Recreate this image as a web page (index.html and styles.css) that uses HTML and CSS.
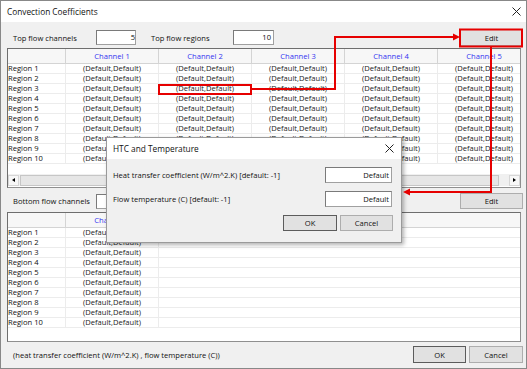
FILE: index.html
```html
<!DOCTYPE html>
<html lang="en">
<head>
  <meta charset="UTF-8" />
  <title>Convection Coefficients</title>
  <link rel="stylesheet" href="styles.css">
</head>
<body>
  <div class="window">
    <div class="titlebar">
      <span class="title">Convection Coefficients</span>
      <svg class="close" width="9" height="9" viewBox="0 0 9 9"><path d="M0.5 0.5L8.5 8.5M8.5 0.5L0.5 8.5" stroke="#222" stroke-width="1"/></svg>
    </div>

    <div class="toolbar">
      <span class="lbl lbl-channels">Top flow channels</span>
      <div class="field field-channels">5</div>
      <span class="lbl lbl-regions">Top flow regions</span>
      <div class="field field-regions">10</div>
      <button class="btn btn-edit">Edit</button>
    </div>

    <div class="grid grid-top">
      <div class="row row-head">
        <div class="cell head-col"></div>
        <div class="cell chan">Channel 1</div>
        <div class="cell chan">Channel 2</div>
        <div class="cell chan">Channel 3</div>
        <div class="cell chan">Channel 4</div>
        <div class="cell chan">Channel 5</div>
      </div>
      <div id="topRows"></div>
      <div class="grid-space"></div>
      <div class="hscroll">
        <div class="sb-btn"><span class="tri-left"></span></div>
        <div class="sb-thumb"></div>
        <div class="sb-btn"><span class="tri-right"></span></div>
      </div>
    </div>

    <div class="toolbar toolbar-bottom">
      <span class="lbl lbl-channels">Bottom flow channels</span>
      <div class="field field-channels"></div>
      <button class="btn btn-edit">Edit</button>
    </div>

    <div class="grid grid-bottom">
      <div class="row row-head">
        <div class="cell head-col"></div>
        <div class="cell chan">Channel 1</div>
        <div class="cell fill"></div>
      </div>
      <div id="bottomRows"></div>
    </div>

    <div class="footer">
      <span class="status">(heat transfer coefficient (W/m^2.K) , flow temperature (C))</span>
      <button class="btn btn-default">OK</button>
      <button class="btn">Cancel</button>
    </div>

    <div class="dialog">
      <div class="dlg-title">
        <span class="title">HTC and Temperature</span>
        <svg class="close" width="9" height="9" viewBox="0 0 9 9"><path d="M0.5 0.5L8.5 8.5M8.5 0.5L0.5 8.5" stroke="#222" stroke-width="1"/></svg>
      </div>
      <div class="dlg-body">
        <div class="dlg-row">
          <span>Heat transfer coefficient (W/m^2.K) [default: -1]</span>
          <div class="field dlg-field">Default</div>
        </div>
        <div class="dlg-row">
          <span>Flow temperature (C) [default: -1]</span>
          <div class="field dlg-field">Default</div>
        </div>
        <div class="dlg-buttons">
          <button class="btn btn-default dlg-ok">OK</button>
          <button class="btn dlg-cancel">Cancel</button>
        </div>
      </div>
    </div>
  </div>

  <!-- red call-outs drawn over the screenshot -->
  <svg class="marks" width="527" height="369" viewBox="0 0 527 369">
    <g fill="none" stroke="#e60000" stroke-width="2">
      <rect x="159" y="85" width="92" height="9"/>
      <polyline points="251,89 335,89 335,37 454,37"/>
      <rect x="460" y="29.5" width="62" height="17"/>
      <polyline points="491,47 491,192 409,192"/>
    </g>
    <g fill="#e60000">
      <polygon points="460,37 453,33.5 453,40.5"/>
      <polygon points="403,192 410,188.5 410,195.5"/>
    </g>
  </svg>

  <script>
    function fillRows(id, count, filler) {
      const body = document.getElementById(id);
      for (let r = 1; r <= 10; r++) {
        const row = document.createElement("div");
        row.className = "row";
        let html = `<div class="cell head-col">Region ${r}</div>`;
        for (let c = 0; c < count; c++) html += `<div class="cell val">(Default,Default)</div>`;
        if (filler) html += `<div class="cell fill"></div>`;
        row.innerHTML = html;
        body.appendChild(row);
      }
    }
    fillRows("topRows", 5, false);
    fillRows("bottomRows", 1, true);
  </script>
</body>
</html>
```

FILE: styles.css
```css
body {
  margin: 0;
  position: relative;
  font-family: "Open Sans", "Liberation Sans", sans-serif;
  font-size: 7.6px;
  color: #111;
  background: #fff;
}
button {
  font-family: inherit;
  font-size: inherit;
  color: #111;
  padding: 0;
}
.window {
  position: relative;
  width: 527px;
  height: 369px;
  box-sizing: border-box;
  border: 1px solid #888;
  background: #f0f0f0;
  overflow: hidden;
}
.titlebar {
  height: 21px;
  background: #fff;
  display: flex;
  align-items: center;
  padding: 0 5px 0 6px;
}
.title {
  font-size: 8.3px;
  color: #111;
}
.close {
  margin-left: auto;
}

/* top / bottom rows with label, field and edit button */
.toolbar {
  display: flex;
  align-items: center;
  height: 17px;
  margin-top: 7px;
  padding: 0 3px 0 12px;
}
.toolbar-bottom {
  height: 16px;
  margin-top: 5px;
}
.lbl-channels {
  width: 83px;
  white-space: nowrap;
}
.lbl-regions {
  width: 82px;
  margin-left: 17px;
}
.field {
  box-sizing: border-box;
  height: 15px;
  background: #fff;
  border: 1px solid #a0a0a0;
  border-top-color: #7a7a7a;
  border-left-color: #7a7a7a;
  text-align: right;
  line-height: 13px;
  padding-right: 2px;
  overflow: hidden;
}
.field-channels {
  width: 40px;
  padding-right: 0;
  margin-right: -2px;
}
.field-regions {
  width: 41px;
}
.btn {
  box-sizing: border-box;
  background: #e1e1e1;
  border: 1px solid #adadad;
  height: 17px;
  line-height: 14px;
}
.btn-default {
  border-color: #5c5c5c;
}
.btn-edit {
  margin-left: auto;
  width: 63px;
}
.toolbar-bottom .btn-edit {
  height: 16px;
}

/* grids */
.grid {
  box-sizing: border-box;
  margin: 2px 5px 0 6px;
  height: 140px;
  background: #fff;
  border: 1px solid #8f8f8f;
  border-top-color: #6e6e6e;
  border-left-color: #6e6e6e;
  display: flex;
  flex-direction: column;
  overflow: hidden;
}
.grid-bottom {
  margin-top: 3px;
  height: 130px;
}
.row {
  display: flex;
  height: 10px;
  flex: none;
}
.row-head {
  height: 15px;
  background: #f7f7f7;
}
.cell {
  box-sizing: border-box;
  flex: none;
  width: 93px;
  border-right: 1px solid #ececec;
  border-bottom: 1px solid #ececec;
  line-height: 9px;
  white-space: nowrap;
  overflow: hidden;
}
.row-head .cell {
  border-right-color: #d4d4d4;
  border-bottom-color: #d4d4d4;
  line-height: 14px;
}
.head-col {
  width: 58px;
}
.chan {
  text-align: center;
  color: #3434f0;
}
.val {
  text-align: center;
  color: #222;
}
.fill {
  flex: 1;
  border-right: none;
}
.grid-space {
  flex: 1;
}
.hscroll {
  display: flex;
  align-items: center;
  height: 12px;
  margin-bottom: 1px;
  background: #f0f0f0;
}
.sb-btn {
  width: 11px;
  height: 11px;
  display: flex;
  align-items: center;
  justify-content: center;
  background: #f7f7f7;
  border: 1px solid #d6d6d6;
  box-sizing: border-box;
}
.sb-thumb {
  flex: 1;
  height: 11px;
  box-sizing: border-box;
  margin: 0 10px 0 1px;
  background: #e6e6e6;
  border: 1px solid #c6c6c6;
}
.tri-left {
  border-top: 2.5px solid transparent;
  border-bottom: 2.5px solid transparent;
  border-right: 3px solid #000;
}
.tri-right {
  border-top: 2.5px solid transparent;
  border-bottom: 2.5px solid transparent;
  border-left: 3px solid #000;
}

/* footer */
.footer {
  display: flex;
  align-items: center;
  margin-top: 4px;
  padding: 0 3px 0 12px;
  gap: 3px;
}
.status {
  margin-right: auto;
}
.footer .btn {
  width: 54px;
}
.footer .btn-default {
  width: 53px;
}

/* modal dialog window over the grids */
.dialog {
  position: absolute;
  left: 105px;
  top: 136px;
  width: 296px;
  height: 106px;
  box-sizing: border-box;
  border: 1px solid #9a9a9a;
  background: #f0f0f0;
  box-shadow: 2px 2px 4px rgba(0, 0, 0, 0.3);
}
.dlg-title {
  height: 21px;
  background: #fff;
  display: flex;
  align-items: center;
  padding: 0 7px 0 6px;
}
.dlg-body {
  padding: 8px 8px 0 6px;
}
.dlg-row {
  display: flex;
  align-items: center;
  justify-content: space-between;
  height: 16px;
  margin-bottom: 8px;
}
.dlg-field {
  width: 67px;
  height: 16px;
  margin-right: 1px;
  line-height: 14px;
}
.dlg-buttons {
  display: flex;
  justify-content: flex-end;
  gap: 3px;
  margin-top: 7px;
}
.dlg-buttons .btn {
  height: 16px;
}
.dlg-ok {
  width: 54px;
}
.dlg-cancel {
  width: 53px;
}

.marks {
  position: absolute;
  left: 0;
  top: 0;
  pointer-events: none;
}
```
